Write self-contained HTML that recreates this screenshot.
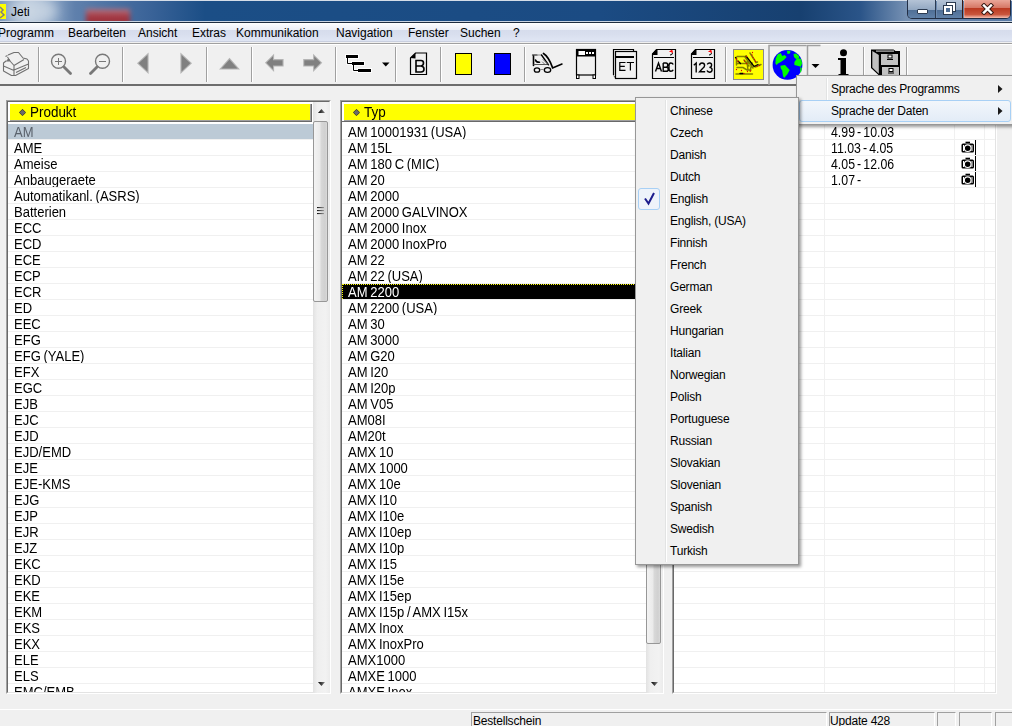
<!DOCTYPE html>
<html><head><meta charset="utf-8">
<style>
*{margin:0;padding:0;box-sizing:border-box}
html,body{width:1012px;height:726px;overflow:hidden;background:#f0f0f0;font-family:"Liberation Sans",sans-serif}
.a{position:absolute}
.t{position:absolute;white-space:nowrap}
.sep{position:absolute;top:47px;width:2px;height:35px;border-left:1px solid #a0a0a0;border-right:1px solid #fff}
.row{position:absolute;height:16px;white-space:nowrap;font-size:13px;line-height:16px;color:#000;word-spacing:-1px}
.hl{position:absolute;height:1px;background:#f0f0f0}
.tx{display:inline-block;font-size:14px;transform:scaleX(.93);transform-origin:0 0;position:relative}
.mi{position:absolute;font-size:12px;color:#000;white-space:nowrap}
</style></head><body>

<div class="a" style="left:0;top:0;width:1012px;height:23px;background:linear-gradient(90deg,#7d98bb 0px,#a9bbd2 30px,#88a2c3 50px,#5f80ac 75px,#4d72a3 110px,#3a6398 150px,#1b4e86 205px,#1b4b83 600px,#174070 800px,#2a5488 860px,#7590b3 906px,#5678a5 1012px)"></div>
<div class="a" style="left:0;top:0;width:1012px;height:1px;background:#d5dde8"></div>
<div class="a" style="left:0;top:1px;width:300px;height:20px;overflow:hidden"><div class="a" style="left:86px;top:8px;width:44px;height:16px;background:linear-gradient(#b87a86,#a33843 45%,#9a2e38);filter:blur(2.5px)"></div><div class="a" style="left:8px;top:-4px;width:50px;height:28px;border-radius:50%;background:#d6e0ea;filter:blur(6px);opacity:.7"></div></div>
<div class="a" style="left:0;top:21px;width:1012px;height:1px;background:#c9d4e3"></div>
<div class="a" style="left:0;top:22px;width:1012px;height:1px;background:#1f2d40"></div>
<div class="a" style="left:0;top:4px;width:6px;height:15px;background:#ff0"></div>
<svg class="a" style="left:0;top:4px" width="6" height="15"><path d="M0 3 L3 6 L1 8 L4 11 L0 14" fill="none" stroke="#808080" stroke-width="1.5"/></svg>
<div class="t" style="left:11px;top:5px;font-size:12px;color:#000">Jeti</div>
<div class="a" style="left:907px;top:0;width:104px;height:19px;border:1px solid rgba(20,30,50,.85);border-top:none;border-radius:0 0 5px 5px;overflow:hidden"><div class="a" style="left:0;top:0;width:28px;height:19px;background:linear-gradient(#b4c3d6 0%,#93a8c2 50%,#4f6e95 52%,#6283ab 100%);border-right:1px solid #2a3a52"></div><div class="a" style="left:29px;top:0;width:26px;height:19px;background:linear-gradient(#b4c3d6 0%,#93a8c2 50%,#4f6e95 52%,#6283ab 100%);border-right:1px solid #3a1a14"></div><div class="a" style="left:56px;top:0;width:48px;height:18px;background:linear-gradient(#eaa799 0%,#d67866 45%,#bb3a22 50%,#c9553c 85%,#e8a090 100%);border:1px solid rgba(255,200,180,.35);border-top:none"></div></div>
<div class="a" style="left:917px;top:9px;width:11px;height:5px;background:#fff;border:1px solid #2b3a50;border-radius:1px"></div>
<div class="a" style="left:947px;top:3px;width:8px;height:8px;border:2px solid #fff;outline:1px solid #2b3a50"></div>
<div class="a" style="left:944px;top:6px;width:8px;height:8px;border:2px solid #fff;outline:1px solid #2b3a50;background:#4f6e95"></div>
<svg class="a" style="left:980px;top:3px" width="15" height="12"><path d="M4 2.5 L11 9.5 M11 2.5 L4 9.5" stroke="#3a1a14" stroke-width="4.4" stroke-linecap="square"/><path d="M4 2.5 L11 9.5 M11 2.5 L4 9.5" stroke="#fff" stroke-width="2.4" stroke-linecap="square"/></svg>
<div class="a" style="left:0;top:23px;width:1012px;height:18px;background:linear-gradient(#ffffff 0px,#f5f6fb 3px,#eceff7 7px,#d6dcec 7px,#d8deee 11px,#e0e6f4 18px)"></div>
<div class="a" style="left:0;top:41px;width:1012px;height:1px;background:#c9cfdf"></div>
<div class="a" style="left:0;top:42px;width:1012px;height:1px;background:#f0f0f0"></div>
<div class="a" style="left:0;top:43px;width:1012px;height:1px;background:#a0a0a0"></div>
<div class="a" style="left:0;top:44px;width:1012px;height:1px;background:#fff"></div>
<div class="mi" style="left:-2px;top:26px">Programm</div>
<div class="mi" style="left:68px;top:26px">Bearbeiten</div>
<div class="mi" style="left:138px;top:26px">Ansicht</div>
<div class="mi" style="left:192px;top:26px">Extras</div>
<div class="mi" style="left:236px;top:26px">Kommunikation</div>
<div class="mi" style="left:336px;top:26px">Navigation</div>
<div class="mi" style="left:408px;top:26px">Fenster</div>
<div class="mi" style="left:460px;top:26px">Suchen</div>
<div class="mi" style="left:513px;top:26px">?</div>
<div class="a" style="left:0;top:84px;width:1012px;height:2px;background:#6d6d6d"></div>
<div class="sep" style="left:38px"></div>
<div class="sep" style="left:122px"></div>
<div class="sep" style="left:206px"></div>
<div class="sep" style="left:251px"></div>
<div class="sep" style="left:335px"></div>
<div class="sep" style="left:395px"></div>
<div class="sep" style="left:440px"></div>
<div class="sep" style="left:524px"></div>
<div class="sep" style="left:725px"></div>
<div class="sep" style="left:863px"></div>
<div class="sep" style="left:906px"></div>
<svg class="a" style="left:0;top:0" width="1012" height="90" shape-rendering="geometricPrecision">
<g fill="none" stroke="#707070" stroke-width="1.1" stroke-linejoin="round">
 <path d="M5.5 56.5 L7.5 55.5 M8 55 L14 52.5 L18.5 52.5 L23 58 L27 59 L28.5 61 L28.5 68.5 L15.5 75.5 L11.5 75.5 L3.5 71 L3.5 63 L6 61 L10 61 L14 65.5 L14 75.5 M14 65.5 L24 59.5 M7.5 57 L10 61 M3.5 66 L14 70.5 M14 70 L28.5 64 M16 72.5 L26 67.5"/>
</g>
<path d="M7.5 59 L9.5 59 L10.5 61 L7 61Z" fill="#707070"/>
<g fill="none" stroke="#787878">
 <circle cx="58.5" cy="61.3" r="7" stroke-width="1.4"/>
 <path d="M55 61.5 H62 M58.5 58 V65" stroke-width="1"/>
 <path d="M64 67 L70.5 73.5" stroke-width="2.8" stroke-linecap="round"/>
 <circle cx="102.5" cy="61.3" r="7" stroke-width="1.4"/>
 <path d="M99 61.5 H106" stroke-width="1"/>
 <path d="M97 67 L90.5 73.5" stroke-width="2.8" stroke-linecap="round"/>
</g>
<g fill="#808080" stroke="#b4b4b4" stroke-width="2.2" paint-order="stroke" stroke-linejoin="miter">
 <path d="M147.5 55 L147.5 71.5 L138.6 63.2Z"/>
 <path d="M181.5 55 L181.5 71.5 L190.4 63.2Z"/>
 <path d="M221.5 68.5 L229.5 59.5 L237.5 68.5Z"/>
 <path d="M266.5 62.8 L273 56.3 L273 60.2 L282.5 60.2 L282.5 65.5 L273 65.5 L273 69.3Z"/>
 <path d="M320.7 62.8 L314.2 56.3 L314.2 60.2 L304.3 60.2 L304.3 65.5 L314.2 65.5 L314.2 69.3Z"/>
</g>
<g fill="#fff">
 <rect x="345" y="54" width="14" height="5"/>
 <rect x="351" y="61" width="14" height="5"/>
 <rect x="357" y="68" width="15" height="5"/>
</g>
<g fill="#000">
 <rect x="346" y="55" width="12" height="3"/>
 <rect x="352" y="62" width="12" height="3"/>
 <rect x="358" y="69" width="13" height="3"/>
</g>
<path d="M347.5 58 V63.5 H351.5 M353.5 65 V70.5 H357.5" fill="none" stroke="#fff" stroke-width="2.5"/><path d="M347.5 58 V63.5 H352 M353.5 65 V70.5 H358" fill="none" stroke="#000" stroke-width="1"/><g fill="#000"><rect x="346" y="55" width="12" height="3"/><rect x="352" y="62" width="12" height="3"/><rect x="358" y="69" width="13" height="3"/></g>
<path d="M382 62.5 H389.5 L385.75 66.5Z" fill="#000"/>
<path d="M410.5 58 L415.5 53 H426.5 V74.5 H410.5Z" fill="#f0f0f0" stroke="#000" stroke-width="1.2"/>
<path d="M410.5 58 L415.5 53 V58.5Z" fill="#000"/>
<path d="M416 60.5 H421 Q423.5 60.5 423.5 63 Q423.5 65.5 421 66 Q424 66.5 424 69 Q424 72 421 72 H416Z M416 66 H421" fill="none" stroke="#000" stroke-width="1.6"/>
<rect x="455.5" y="53.5" width="16" height="21" fill="#ff0" stroke="#000" stroke-width="1"/>
<rect x="494.5" y="53.5" width="16" height="21" fill="#00f" stroke="#000" stroke-width="1"/>
<g transform="translate(528,46)" fill="none" stroke-linecap="round">
 <path d="M5.5 10 V19.5" stroke="#000" stroke-width="1.6"/>
 <path d="M4.5 9 L9 9" stroke="#000" stroke-width="1.2"/>
 <path d="M9 9 L13.5 9" stroke="#888" stroke-width="1.2"/>
 <path d="M6 18.5 L19.5 18.5" stroke="#555" stroke-width="1.1"/>
 <path d="M7.5 14 Q8 16.2 11.5 16.3" stroke="#000" stroke-width="1.6"/>
 <path d="M13.5 9 L20.5 18.8" stroke="#000" stroke-width="1.4"/>
 <path d="M15 13.5 L19.5 18 M14.5 16 L16.5 18" stroke="#777" stroke-width="1"/>
 <path d="M15.5 7.5 Q20.5 10.5 24.5 21.5" stroke="#000" stroke-width="1.7"/>
 <path d="M24.5 22 L34 18" stroke="#000" stroke-width="1.5"/>
 <ellipse cx="9" cy="24" rx="2.7" ry="2.2" stroke="#000" stroke-width="1.3"/>
 <ellipse cx="19.5" cy="24" rx="3.2" ry="2.3" stroke="#000" stroke-width="1.3"/>
 <path d="M12.5 23.5 H15.5" stroke="#888" stroke-width="1"/>
</g>
<rect x="576.5" y="49.5" width="19" height="25.5" fill="#f0f0f0" stroke="#000" stroke-width="1.2"/>
<rect x="576" y="49" width="20" height="7.5" fill="#000"/>
<rect x="578.5" y="51" width="6.5" height="4" fill="#fff"/>
<rect x="586" y="52" width="2" height="2" fill="#fff"/><rect x="589" y="52" width="2" height="2" fill="#fff"/><rect x="592" y="52" width="2" height="2" fill="#fff"/>
<rect x="576.5" y="75" width="2.5" height="3.5" fill="#fff" stroke="#000"/><rect x="593" y="75" width="2.5" height="3.5" fill="#fff" stroke="#000"/>
<path d="M613.5 75 V49.5 H633.5 V51.5" fill="#f0f0f0" stroke="#000" stroke-width="1.2"/>
<path d="M613.5 75.5 L615.5 78" stroke="#555" stroke-width="1"/>
<rect x="615.5" y="51.5" width="21" height="27" fill="#f0f0f0" stroke="#000" stroke-width="1.2"/>
<rect x="616" y="56" width="18" height="2" fill="#000"/>
<path d="M625.5 62.5 H619.8 V70.3 H625.5 M619.8 66.4 H624.8 M626.8 62.5 H634 M630.4 62.5 V70.5" fill="none" stroke="#000" stroke-width="1.2"/>
<g>
 <path d="M652.5 54 L656.5 49.5 H675.5 V78.5 H652.5Z" fill="#f0f0f0" stroke="#000" stroke-width="1.2"/>
 <path d="M652 54 L656.5 49 L657.5 49 V55 H652Z" fill="#000"/>
 <path d="M654 57.5 H674" stroke="#000" stroke-width="1"/>
 <path d="M671 50 L672.5 53 M669.5 51.5 L673 51" stroke="#f00" stroke-width="1.2"/>
 <path d="M670 55 Q672.5 55 672.5 53" fill="none" stroke="#000" stroke-width="1"/>
 <path d="M655.5 71.5 L658.5 63 L661.5 71.5 M656.6 68.5 H660.4 M663.2 63 V71.3 H666.5 Q668.2 71.3 668.2 69.2 Q668.2 67.2 666.3 67.2 H663.2 M663.2 63 H666 Q667.7 63 667.7 65 Q667.7 67.2 666 67.2 M673.2 64.6 Q672.6 63 670.8 63 Q669 63 669 65.5 V68.8 Q669 71.3 670.8 71.3 Q672.6 71.3 673.2 69.7" fill="none" stroke="#000" stroke-width="1.4"/>
 <path d="M691.5 54 L695.5 49.5 H714.5 V78.5 H691.5Z" fill="#f0f0f0" stroke="#000" stroke-width="1.2"/>
 <path d="M691 54 L695.5 49 L696.5 49 V55 H691Z" fill="#000"/>
 <path d="M693 57.5 H713" stroke="#000" stroke-width="1"/>
 <path d="M710 50 L711.5 53 M708.5 51.5 L712 51" stroke="#f00" stroke-width="1.2"/>
 <path d="M709 55 Q711.5 55 711.5 53" fill="none" stroke="#000" stroke-width="1"/>
 <path d="M693.8 65.2 L696.2 63 V72.5 M699.5 65.3 Q699.8 63 702 63 Q704.6 63 704.6 65.5 Q704.6 67.2 702.3 68.8 L699.6 71.8 H705.2 M707.2 64.3 Q708 63 709.6 63 Q711.6 63 711.6 65.1 Q711.6 67.3 709.4 67.4 Q712.1 67.6 712.1 69.8 Q712.1 72.2 709.6 72.2 Q707.6 72.2 707 70.6" fill="none" stroke="#000" stroke-width="1.4"/>
</g>
<rect x="733.5" y="49.5" width="30" height="30" fill="#ff0" stroke="#8a8a8a" stroke-width="1"/>
<g transform="translate(734,50)" fill="none" stroke-linecap="round">
 <path d="M3 6.5 L11 6.5 M2.5 8 V15 M3 13.5 L14 13.5 M3 17.5 L9 17.5 L13 20 L17 20 M2 24 L18.5 24 M11 7 L19 18 M10 10 L15 16 M13 12 L14 20 M18 13 L16 21 M16 3 L22 12.5 L23.5 12 M21 17 L27 14.5" stroke="#808000" stroke-width="1.5"/>
 <path d="M12 6 L20 16.5 L24 14.5 M4 11 L6.5 13.5 M6 23.5 H9 M1.5 7.5 L2 8" stroke="#000" stroke-width="1.3"/>
 <path d="M2.5 9 L2.5 9.2 M4 11.5 L4 11.6 M10.5 11 L10.5 11.1 M12.5 13.5 L12.5 13.6 M2.5 19.5 L2.5 19.6 M7.5 20.5 L7.5 20.6 M13.5 21.5 L13.5 21.6 M16.5 21 L16.5 21.1 M12.5 6.5 L12.5 6.6 M18.5 2.5 L18.5 2.6 M18 5 L18 5.1 M19 7.5 L19 7.6 M20.5 9.5 L20.5 9.6 M21.5 11.5 L21.5 11.6 M23 16.5 L23 16.6 M25.5 15.5 L25.5 15.6 M10 23.5 L10 23.6" stroke="#e00000" stroke-width="1.3"/>
</g>
<path d="M769 85 V45.5 H806.5 M807.5 76 V45.5 H820.5" fill="none" stroke="#a0a0a0" stroke-width="1.5"/>
<circle cx="787.5" cy="64.9" r="14.9" fill="#0000ff"/>
<g fill="#00ff00">
 <path d="M775.4 63.5 L775.7 58.8 L777.6 54.6 L780.8 52.9 L782.2 56 L784.6 55 L786.7 56.9 L784.1 59.7 L780.8 62 L778 63.5 L776.6 64.9Z"/>
 <path d="M786.8 50.6 L790.5 51 L790 53.5 L787.5 54Z"/>
 <path d="M780.4 65.8 L785 64.9 L789.7 70 L787.4 74.2 L784.1 78 L783 76 L782.2 70.5 L780.8 68.6Z"/>
 <path d="M794.4 62 L797.2 58.3 L801 58.8 L802.1 63 L801 66.7 L794.4 64.9Z"/>
 <path d="M793.5 54 L796 53.5 L799 56 L799 58.3 L796 59 L794 57Z"/>
 <path d="M800.5 67 L802 68 L801 72.4 L800 71.9Z"/>
</g>
<path d="M811.5 64 H819.5 L815.5 68Z" fill="#000"/>
<circle cx="843.5" cy="52.8" r="3.5" fill="#000"/>
<path d="M838 58 H846 V74 H848.5 V75.5 H838.5 V74 H840.5 V60 H838Z" fill="#000"/>
<path d="M871 49.5 H893.5 L895.5 51 H900 V75 H878.5 L871 68Z" fill="#000"/>
<path d="M872.3 51 L878.8 55 V73.8 L872.3 67.5Z" fill="#c0c0c0"/>
<rect x="881" y="54" width="17" height="11" fill="#c0c0c0"/>
<rect x="882" y="67" width="17" height="8" fill="#c0c0c0"/>
<rect x="876" y="50.5" width="18" height="1.2" fill="#c0c0c0"/>
<rect x="888" y="55" width="4" height="3" fill="#fff" stroke="#000" stroke-width="1"/>
<rect x="887" y="59" width="6" height="1" fill="#000"/>
<rect x="889" y="68.5" width="4" height="3" fill="#fff" stroke="#000" stroke-width="1"/>
<rect x="888" y="72.5" width="6" height="1" fill="#000"/>
</svg>
<div class="a" style="left:6px;top:100px;width:325px;height:594px;background:#fff;border-top:1px solid #a0a0a0;border-left:1px solid #a0a0a0;border-right:1px solid #fff;border-bottom:1px solid #fff"></div>
<div class="a" style="left:7px;top:101px;width:323px;height:592px;border-top:1px solid #696969;border-left:1px solid #696969;border-right:1px solid #e3e3e3;border-bottom:1px solid #e3e3e3"></div>
<div class="a" style="left:8px;top:102px;width:305px;height:22px;background:#fff"></div>
<div class="a" style="left:10px;top:104px;width:302px;height:18px;background:#ff0;border-right:1px solid #696969;border-bottom:1px solid #696969"></div>
<div class="a" style="left:10px;top:104px;width:301px;height:17px;border-right:1px solid #a0a0a0;border-bottom:1px solid #a0a0a0"></div>
<div class="a" style="left:8px;top:121px;width:304px;height:1px;background:#696969"></div>
<svg class="a" style="left:19px;top:108.5px" width="7" height="7"><path d="M3.5 0.3 L6.7 3.5 L3.5 6.7 L0.3 3.5Z" fill="#6a6a6a" stroke="#202020" stroke-width="0.7"/></svg>
<div class="t" style="left:30px;top:104px;font-size:14px;line-height:16px;transform:scaleX(.96);transform-origin:0 0">Produkt</div>
<div class="row" style="left:8px;top:124px;width:305px;height:15px;line-height:15px;overflow:hidden;background:#bccad6;color:#5a626c;padding-left:6px"><span class="tx" style="top:1px">AM</span></div>
<div class="hl" style="left:8px;top:139px;width:305px"></div>
<div class="row" style="left:8px;top:140px;width:305px;height:15px;line-height:15px;overflow:hidden;color:#000;padding-left:6px"><span class="tx" style="top:1px">AME</span></div>
<div class="hl" style="left:8px;top:155px;width:305px"></div>
<div class="row" style="left:8px;top:156px;width:305px;height:15px;line-height:15px;overflow:hidden;color:#000;padding-left:6px"><span class="tx" style="top:1px">Ameise</span></div>
<div class="hl" style="left:8px;top:171px;width:305px"></div>
<div class="row" style="left:8px;top:172px;width:305px;height:15px;line-height:15px;overflow:hidden;color:#000;padding-left:6px"><span class="tx" style="top:1px">Anbaugeraete</span></div>
<div class="hl" style="left:8px;top:187px;width:305px"></div>
<div class="row" style="left:8px;top:188px;width:305px;height:15px;line-height:15px;overflow:hidden;color:#000;padding-left:6px"><span class="tx" style="top:1px">Automatikanl. (ASRS)</span></div>
<div class="hl" style="left:8px;top:203px;width:305px"></div>
<div class="row" style="left:8px;top:204px;width:305px;height:15px;line-height:15px;overflow:hidden;color:#000;padding-left:6px"><span class="tx" style="top:1px">Batterien</span></div>
<div class="hl" style="left:8px;top:219px;width:305px"></div>
<div class="row" style="left:8px;top:220px;width:305px;height:15px;line-height:15px;overflow:hidden;color:#000;padding-left:6px"><span class="tx" style="top:1px">ECC</span></div>
<div class="hl" style="left:8px;top:235px;width:305px"></div>
<div class="row" style="left:8px;top:236px;width:305px;height:15px;line-height:15px;overflow:hidden;color:#000;padding-left:6px"><span class="tx" style="top:1px">ECD</span></div>
<div class="hl" style="left:8px;top:251px;width:305px"></div>
<div class="row" style="left:8px;top:252px;width:305px;height:15px;line-height:15px;overflow:hidden;color:#000;padding-left:6px"><span class="tx" style="top:1px">ECE</span></div>
<div class="hl" style="left:8px;top:267px;width:305px"></div>
<div class="row" style="left:8px;top:268px;width:305px;height:15px;line-height:15px;overflow:hidden;color:#000;padding-left:6px"><span class="tx" style="top:1px">ECP</span></div>
<div class="hl" style="left:8px;top:283px;width:305px"></div>
<div class="row" style="left:8px;top:284px;width:305px;height:15px;line-height:15px;overflow:hidden;color:#000;padding-left:6px"><span class="tx" style="top:1px">ECR</span></div>
<div class="hl" style="left:8px;top:299px;width:305px"></div>
<div class="row" style="left:8px;top:300px;width:305px;height:15px;line-height:15px;overflow:hidden;color:#000;padding-left:6px"><span class="tx" style="top:1px">ED</span></div>
<div class="hl" style="left:8px;top:315px;width:305px"></div>
<div class="row" style="left:8px;top:316px;width:305px;height:15px;line-height:15px;overflow:hidden;color:#000;padding-left:6px"><span class="tx" style="top:1px">EEC</span></div>
<div class="hl" style="left:8px;top:331px;width:305px"></div>
<div class="row" style="left:8px;top:332px;width:305px;height:15px;line-height:15px;overflow:hidden;color:#000;padding-left:6px"><span class="tx" style="top:1px">EFG</span></div>
<div class="hl" style="left:8px;top:347px;width:305px"></div>
<div class="row" style="left:8px;top:348px;width:305px;height:15px;line-height:15px;overflow:hidden;color:#000;padding-left:6px"><span class="tx" style="top:1px">EFG (YALE)</span></div>
<div class="hl" style="left:8px;top:363px;width:305px"></div>
<div class="row" style="left:8px;top:364px;width:305px;height:15px;line-height:15px;overflow:hidden;color:#000;padding-left:6px"><span class="tx" style="top:1px">EFX</span></div>
<div class="hl" style="left:8px;top:379px;width:305px"></div>
<div class="row" style="left:8px;top:380px;width:305px;height:15px;line-height:15px;overflow:hidden;color:#000;padding-left:6px"><span class="tx" style="top:1px">EGC</span></div>
<div class="hl" style="left:8px;top:395px;width:305px"></div>
<div class="row" style="left:8px;top:396px;width:305px;height:15px;line-height:15px;overflow:hidden;color:#000;padding-left:6px"><span class="tx" style="top:1px">EJB</span></div>
<div class="hl" style="left:8px;top:411px;width:305px"></div>
<div class="row" style="left:8px;top:412px;width:305px;height:15px;line-height:15px;overflow:hidden;color:#000;padding-left:6px"><span class="tx" style="top:1px">EJC</span></div>
<div class="hl" style="left:8px;top:427px;width:305px"></div>
<div class="row" style="left:8px;top:428px;width:305px;height:15px;line-height:15px;overflow:hidden;color:#000;padding-left:6px"><span class="tx" style="top:1px">EJD</span></div>
<div class="hl" style="left:8px;top:443px;width:305px"></div>
<div class="row" style="left:8px;top:444px;width:305px;height:15px;line-height:15px;overflow:hidden;color:#000;padding-left:6px"><span class="tx" style="top:1px">EJD/EMD</span></div>
<div class="hl" style="left:8px;top:459px;width:305px"></div>
<div class="row" style="left:8px;top:460px;width:305px;height:15px;line-height:15px;overflow:hidden;color:#000;padding-left:6px"><span class="tx" style="top:1px">EJE</span></div>
<div class="hl" style="left:8px;top:475px;width:305px"></div>
<div class="row" style="left:8px;top:476px;width:305px;height:15px;line-height:15px;overflow:hidden;color:#000;padding-left:6px"><span class="tx" style="top:1px">EJE-KMS</span></div>
<div class="hl" style="left:8px;top:491px;width:305px"></div>
<div class="row" style="left:8px;top:492px;width:305px;height:15px;line-height:15px;overflow:hidden;color:#000;padding-left:6px"><span class="tx" style="top:1px">EJG</span></div>
<div class="hl" style="left:8px;top:507px;width:305px"></div>
<div class="row" style="left:8px;top:508px;width:305px;height:15px;line-height:15px;overflow:hidden;color:#000;padding-left:6px"><span class="tx" style="top:1px">EJP</span></div>
<div class="hl" style="left:8px;top:523px;width:305px"></div>
<div class="row" style="left:8px;top:524px;width:305px;height:15px;line-height:15px;overflow:hidden;color:#000;padding-left:6px"><span class="tx" style="top:1px">EJR</span></div>
<div class="hl" style="left:8px;top:539px;width:305px"></div>
<div class="row" style="left:8px;top:540px;width:305px;height:15px;line-height:15px;overflow:hidden;color:#000;padding-left:6px"><span class="tx" style="top:1px">EJZ</span></div>
<div class="hl" style="left:8px;top:555px;width:305px"></div>
<div class="row" style="left:8px;top:556px;width:305px;height:15px;line-height:15px;overflow:hidden;color:#000;padding-left:6px"><span class="tx" style="top:1px">EKC</span></div>
<div class="hl" style="left:8px;top:571px;width:305px"></div>
<div class="row" style="left:8px;top:572px;width:305px;height:15px;line-height:15px;overflow:hidden;color:#000;padding-left:6px"><span class="tx" style="top:1px">EKD</span></div>
<div class="hl" style="left:8px;top:587px;width:305px"></div>
<div class="row" style="left:8px;top:588px;width:305px;height:15px;line-height:15px;overflow:hidden;color:#000;padding-left:6px"><span class="tx" style="top:1px">EKE</span></div>
<div class="hl" style="left:8px;top:603px;width:305px"></div>
<div class="row" style="left:8px;top:604px;width:305px;height:15px;line-height:15px;overflow:hidden;color:#000;padding-left:6px"><span class="tx" style="top:1px">EKM</span></div>
<div class="hl" style="left:8px;top:619px;width:305px"></div>
<div class="row" style="left:8px;top:620px;width:305px;height:15px;line-height:15px;overflow:hidden;color:#000;padding-left:6px"><span class="tx" style="top:1px">EKS</span></div>
<div class="hl" style="left:8px;top:635px;width:305px"></div>
<div class="row" style="left:8px;top:636px;width:305px;height:15px;line-height:15px;overflow:hidden;color:#000;padding-left:6px"><span class="tx" style="top:1px">EKX</span></div>
<div class="hl" style="left:8px;top:651px;width:305px"></div>
<div class="row" style="left:8px;top:652px;width:305px;height:15px;line-height:15px;overflow:hidden;color:#000;padding-left:6px"><span class="tx" style="top:1px">ELE</span></div>
<div class="hl" style="left:8px;top:667px;width:305px"></div>
<div class="row" style="left:8px;top:668px;width:305px;height:15px;line-height:15px;overflow:hidden;color:#000;padding-left:6px"><span class="tx" style="top:1px">ELS</span></div>
<div class="hl" style="left:8px;top:683px;width:305px"></div>
<div class="row" style="left:8px;top:684px;width:305px;height:8px;line-height:15px;overflow:hidden;color:#000;padding-left:6px"><span class="tx" style="top:1px">EMC/EMB</span></div>
<div class="a" style="left:313px;top:102px;width:17px;height:591px;background:linear-gradient(90deg,#e2e2e2,#efefef 25%,#f2f2f2 75%,#ebebeb)"></div>
<svg class="a" style="left:317px;top:108px" width="9" height="6"><defs><linearGradient id="ag6" x1="0" x2="1"><stop offset="0" stop-color="#000"/><stop offset="1" stop-color="#888"/></linearGradient></defs><path d="M1 5 L4.5 1 L8 5Z" fill="url(#ag6)"/></svg>
<svg class="a" style="left:317px;top:681px" width="9" height="6"><path d="M1 1 L4.5 5 L8 1Z" fill="url(#ag6)"/></svg>
<div class="a" style="left:313px;top:121px;width:15px;height:181px;border:1px solid #979797;border-radius:2px;background:linear-gradient(90deg,#f3f3f3,#eaeaea 45%,#d8d8d8 55%,#d0d0d0 85%,#dadada)"></div>
<svg class="a" style="left:316px;top:206px" width="9" height="9"><defs><linearGradient id="gg" x1="0" x2="1"><stop offset="0" stop-color="#111"/><stop offset="1" stop-color="#999"/></linearGradient></defs><rect x="1" y="1" width="7" height="1.1" fill="url(#gg)"/><rect x="1" y="4" width="7" height="1.1" fill="url(#gg)"/><rect x="1" y="7" width="7" height="1.1" fill="url(#gg)"/></svg>
<div class="a" style="left:340px;top:100px;width:324px;height:594px;background:#fff;border-top:1px solid #a0a0a0;border-left:1px solid #a0a0a0;border-right:1px solid #fff;border-bottom:1px solid #fff"></div>
<div class="a" style="left:341px;top:101px;width:322px;height:592px;border-top:1px solid #696969;border-left:1px solid #696969;border-right:1px solid #e3e3e3;border-bottom:1px solid #e3e3e3"></div>
<div class="a" style="left:342px;top:102px;width:304px;height:22px;background:#fff"></div>
<div class="a" style="left:344px;top:104px;width:301px;height:18px;background:#ff0;border-right:1px solid #696969;border-bottom:1px solid #696969"></div>
<div class="a" style="left:344px;top:104px;width:300px;height:17px;border-right:1px solid #a0a0a0;border-bottom:1px solid #a0a0a0"></div>
<div class="a" style="left:342px;top:121px;width:303px;height:1px;background:#696969"></div>
<svg class="a" style="left:353px;top:108.5px" width="7" height="7"><path d="M3.5 0.3 L6.7 3.5 L3.5 6.7 L0.3 3.5Z" fill="#6a6a6a" stroke="#202020" stroke-width="0.7"/></svg>
<div class="t" style="left:364px;top:104px;font-size:14px;line-height:16px;transform:scaleX(.96);transform-origin:0 0">Typ</div>
<div class="row" style="left:342px;top:124px;width:304px;height:15px;line-height:15px;overflow:hidden;color:#000;padding-left:6px"><span class="tx" style="top:1px">AM 10001931 (USA)</span></div>
<div class="hl" style="left:342px;top:139px;width:304px"></div>
<div class="row" style="left:342px;top:140px;width:304px;height:15px;line-height:15px;overflow:hidden;color:#000;padding-left:6px"><span class="tx" style="top:1px">AM 15L</span></div>
<div class="hl" style="left:342px;top:155px;width:304px"></div>
<div class="row" style="left:342px;top:156px;width:304px;height:15px;line-height:15px;overflow:hidden;color:#000;padding-left:6px"><span class="tx" style="top:1px">AM 180 C (MIC)</span></div>
<div class="hl" style="left:342px;top:171px;width:304px"></div>
<div class="row" style="left:342px;top:172px;width:304px;height:15px;line-height:15px;overflow:hidden;color:#000;padding-left:6px"><span class="tx" style="top:1px">AM 20</span></div>
<div class="hl" style="left:342px;top:187px;width:304px"></div>
<div class="row" style="left:342px;top:188px;width:304px;height:15px;line-height:15px;overflow:hidden;color:#000;padding-left:6px"><span class="tx" style="top:1px">AM 2000</span></div>
<div class="hl" style="left:342px;top:203px;width:304px"></div>
<div class="row" style="left:342px;top:204px;width:304px;height:15px;line-height:15px;overflow:hidden;color:#000;padding-left:6px"><span class="tx" style="top:1px">AM 2000 GALVINOX</span></div>
<div class="hl" style="left:342px;top:219px;width:304px"></div>
<div class="row" style="left:342px;top:220px;width:304px;height:15px;line-height:15px;overflow:hidden;color:#000;padding-left:6px"><span class="tx" style="top:1px">AM 2000 Inox</span></div>
<div class="hl" style="left:342px;top:235px;width:304px"></div>
<div class="row" style="left:342px;top:236px;width:304px;height:15px;line-height:15px;overflow:hidden;color:#000;padding-left:6px"><span class="tx" style="top:1px">AM 2000 InoxPro</span></div>
<div class="hl" style="left:342px;top:251px;width:304px"></div>
<div class="row" style="left:342px;top:252px;width:304px;height:15px;line-height:15px;overflow:hidden;color:#000;padding-left:6px"><span class="tx" style="top:1px">AM 22</span></div>
<div class="hl" style="left:342px;top:267px;width:304px"></div>
<div class="row" style="left:342px;top:268px;width:304px;height:15px;line-height:15px;overflow:hidden;color:#000;padding-left:6px"><span class="tx" style="top:1px">AM 22 (USA)</span></div>
<div class="hl" style="left:342px;top:283px;width:304px"></div>
<div class="row" style="left:342px;top:284px;width:304px;height:15px;line-height:15px;overflow:hidden;background:#000;color:#fff;padding-left:6px"><span class="tx" style="top:1px">AM 2200</span></div>
<div class="a" style="left:342px;top:284px;width:304px;height:15px;border-top:1px dotted #ff0;border-left:1px dotted #ff0"></div>
<div class="hl" style="left:342px;top:299px;width:304px"></div>
<div class="row" style="left:342px;top:300px;width:304px;height:15px;line-height:15px;overflow:hidden;color:#000;padding-left:6px"><span class="tx" style="top:1px">AM 2200 (USA)</span></div>
<div class="hl" style="left:342px;top:315px;width:304px"></div>
<div class="row" style="left:342px;top:316px;width:304px;height:15px;line-height:15px;overflow:hidden;color:#000;padding-left:6px"><span class="tx" style="top:1px">AM 30</span></div>
<div class="hl" style="left:342px;top:331px;width:304px"></div>
<div class="row" style="left:342px;top:332px;width:304px;height:15px;line-height:15px;overflow:hidden;color:#000;padding-left:6px"><span class="tx" style="top:1px">AM 3000</span></div>
<div class="hl" style="left:342px;top:347px;width:304px"></div>
<div class="row" style="left:342px;top:348px;width:304px;height:15px;line-height:15px;overflow:hidden;color:#000;padding-left:6px"><span class="tx" style="top:1px">AM G20</span></div>
<div class="hl" style="left:342px;top:363px;width:304px"></div>
<div class="row" style="left:342px;top:364px;width:304px;height:15px;line-height:15px;overflow:hidden;color:#000;padding-left:6px"><span class="tx" style="top:1px">AM I20</span></div>
<div class="hl" style="left:342px;top:379px;width:304px"></div>
<div class="row" style="left:342px;top:380px;width:304px;height:15px;line-height:15px;overflow:hidden;color:#000;padding-left:6px"><span class="tx" style="top:1px">AM I20p</span></div>
<div class="hl" style="left:342px;top:395px;width:304px"></div>
<div class="row" style="left:342px;top:396px;width:304px;height:15px;line-height:15px;overflow:hidden;color:#000;padding-left:6px"><span class="tx" style="top:1px">AM V05</span></div>
<div class="hl" style="left:342px;top:411px;width:304px"></div>
<div class="row" style="left:342px;top:412px;width:304px;height:15px;line-height:15px;overflow:hidden;color:#000;padding-left:6px"><span class="tx" style="top:1px">AM08I</span></div>
<div class="hl" style="left:342px;top:427px;width:304px"></div>
<div class="row" style="left:342px;top:428px;width:304px;height:15px;line-height:15px;overflow:hidden;color:#000;padding-left:6px"><span class="tx" style="top:1px">AM20t</span></div>
<div class="hl" style="left:342px;top:443px;width:304px"></div>
<div class="row" style="left:342px;top:444px;width:304px;height:15px;line-height:15px;overflow:hidden;color:#000;padding-left:6px"><span class="tx" style="top:1px">AMX 10</span></div>
<div class="hl" style="left:342px;top:459px;width:304px"></div>
<div class="row" style="left:342px;top:460px;width:304px;height:15px;line-height:15px;overflow:hidden;color:#000;padding-left:6px"><span class="tx" style="top:1px">AMX 1000</span></div>
<div class="hl" style="left:342px;top:475px;width:304px"></div>
<div class="row" style="left:342px;top:476px;width:304px;height:15px;line-height:15px;overflow:hidden;color:#000;padding-left:6px"><span class="tx" style="top:1px">AMX 10e</span></div>
<div class="hl" style="left:342px;top:491px;width:304px"></div>
<div class="row" style="left:342px;top:492px;width:304px;height:15px;line-height:15px;overflow:hidden;color:#000;padding-left:6px"><span class="tx" style="top:1px">AMX I10</span></div>
<div class="hl" style="left:342px;top:507px;width:304px"></div>
<div class="row" style="left:342px;top:508px;width:304px;height:15px;line-height:15px;overflow:hidden;color:#000;padding-left:6px"><span class="tx" style="top:1px">AMX I10e</span></div>
<div class="hl" style="left:342px;top:523px;width:304px"></div>
<div class="row" style="left:342px;top:524px;width:304px;height:15px;line-height:15px;overflow:hidden;color:#000;padding-left:6px"><span class="tx" style="top:1px">AMX I10ep</span></div>
<div class="hl" style="left:342px;top:539px;width:304px"></div>
<div class="row" style="left:342px;top:540px;width:304px;height:15px;line-height:15px;overflow:hidden;color:#000;padding-left:6px"><span class="tx" style="top:1px">AMX I10p</span></div>
<div class="hl" style="left:342px;top:555px;width:304px"></div>
<div class="row" style="left:342px;top:556px;width:304px;height:15px;line-height:15px;overflow:hidden;color:#000;padding-left:6px"><span class="tx" style="top:1px">AMX I15</span></div>
<div class="hl" style="left:342px;top:571px;width:304px"></div>
<div class="row" style="left:342px;top:572px;width:304px;height:15px;line-height:15px;overflow:hidden;color:#000;padding-left:6px"><span class="tx" style="top:1px">AMX I15e</span></div>
<div class="hl" style="left:342px;top:587px;width:304px"></div>
<div class="row" style="left:342px;top:588px;width:304px;height:15px;line-height:15px;overflow:hidden;color:#000;padding-left:6px"><span class="tx" style="top:1px">AMX I15ep</span></div>
<div class="hl" style="left:342px;top:603px;width:304px"></div>
<div class="row" style="left:342px;top:604px;width:304px;height:15px;line-height:15px;overflow:hidden;color:#000;padding-left:6px"><span class="tx" style="top:1px">AMX I15p / AMX I15x</span></div>
<div class="hl" style="left:342px;top:619px;width:304px"></div>
<div class="row" style="left:342px;top:620px;width:304px;height:15px;line-height:15px;overflow:hidden;color:#000;padding-left:6px"><span class="tx" style="top:1px">AMX Inox</span></div>
<div class="hl" style="left:342px;top:635px;width:304px"></div>
<div class="row" style="left:342px;top:636px;width:304px;height:15px;line-height:15px;overflow:hidden;color:#000;padding-left:6px"><span class="tx" style="top:1px">AMX InoxPro</span></div>
<div class="hl" style="left:342px;top:651px;width:304px"></div>
<div class="row" style="left:342px;top:652px;width:304px;height:15px;line-height:15px;overflow:hidden;color:#000;padding-left:6px"><span class="tx" style="top:1px">AMX1000</span></div>
<div class="hl" style="left:342px;top:667px;width:304px"></div>
<div class="row" style="left:342px;top:668px;width:304px;height:15px;line-height:15px;overflow:hidden;color:#000;padding-left:6px"><span class="tx" style="top:1px">AMXE 1000</span></div>
<div class="hl" style="left:342px;top:683px;width:304px"></div>
<div class="row" style="left:342px;top:684px;width:304px;height:8px;line-height:15px;overflow:hidden;color:#000;padding-left:6px"><span class="tx" style="top:1px">AMXE Inox</span></div>
<div class="a" style="left:646px;top:102px;width:17px;height:591px;background:linear-gradient(90deg,#e2e2e2,#efefef 25%,#f2f2f2 75%,#ebebeb)"></div>
<svg class="a" style="left:650px;top:108px" width="9" height="6"><defs><linearGradient id="ag340" x1="0" x2="1"><stop offset="0" stop-color="#000"/><stop offset="1" stop-color="#888"/></linearGradient></defs><path d="M1 5 L4.5 1 L8 5Z" fill="url(#ag340)"/></svg>
<svg class="a" style="left:650px;top:681px" width="9" height="6"><path d="M1 1 L4.5 5 L8 1Z" fill="url(#ag340)"/></svg>
<div class="a" style="left:646px;top:121px;width:15px;height:523px;border:1px solid #979797;border-radius:2px;background:linear-gradient(90deg,#f3f3f3,#eaeaea 45%,#d8d8d8 55%,#d0d0d0 85%,#dadada)"></div>
<div class="a" style="left:672px;top:100px;width:325px;height:594px;background:#fff;border-top:1px solid #a0a0a0;border-left:1px solid #a0a0a0;border-right:1px solid #fff;border-bottom:1px solid #fff"></div>
<div class="a" style="left:673px;top:101px;width:323px;height:592px;border-top:1px solid #696969;border-left:1px solid #696969;border-right:1px solid #e3e3e3;border-bottom:1px solid #e3e3e3"></div>
<div class="hl" style="left:674px;top:139px;width:321px"></div>
<div class="hl" style="left:674px;top:155px;width:321px"></div>
<div class="hl" style="left:674px;top:171px;width:321px"></div>
<div class="hl" style="left:674px;top:187px;width:321px"></div>
<div class="hl" style="left:674px;top:203px;width:321px"></div>
<div class="hl" style="left:674px;top:219px;width:321px"></div>
<div class="hl" style="left:674px;top:235px;width:321px"></div>
<div class="hl" style="left:674px;top:251px;width:321px"></div>
<div class="hl" style="left:674px;top:267px;width:321px"></div>
<div class="hl" style="left:674px;top:283px;width:321px"></div>
<div class="hl" style="left:674px;top:299px;width:321px"></div>
<div class="hl" style="left:674px;top:315px;width:321px"></div>
<div class="hl" style="left:674px;top:331px;width:321px"></div>
<div class="hl" style="left:674px;top:347px;width:321px"></div>
<div class="hl" style="left:674px;top:363px;width:321px"></div>
<div class="hl" style="left:674px;top:379px;width:321px"></div>
<div class="hl" style="left:674px;top:395px;width:321px"></div>
<div class="hl" style="left:674px;top:411px;width:321px"></div>
<div class="hl" style="left:674px;top:427px;width:321px"></div>
<div class="hl" style="left:674px;top:443px;width:321px"></div>
<div class="hl" style="left:674px;top:459px;width:321px"></div>
<div class="hl" style="left:674px;top:475px;width:321px"></div>
<div class="hl" style="left:674px;top:491px;width:321px"></div>
<div class="hl" style="left:674px;top:507px;width:321px"></div>
<div class="hl" style="left:674px;top:523px;width:321px"></div>
<div class="hl" style="left:674px;top:539px;width:321px"></div>
<div class="hl" style="left:674px;top:555px;width:321px"></div>
<div class="hl" style="left:674px;top:571px;width:321px"></div>
<div class="hl" style="left:674px;top:587px;width:321px"></div>
<div class="hl" style="left:674px;top:603px;width:321px"></div>
<div class="hl" style="left:674px;top:619px;width:321px"></div>
<div class="hl" style="left:674px;top:635px;width:321px"></div>
<div class="hl" style="left:674px;top:651px;width:321px"></div>
<div class="hl" style="left:674px;top:667px;width:321px"></div>
<div class="hl" style="left:674px;top:683px;width:321px"></div>
<div class="a" style="left:824px;top:102px;width:1px;height:590px;background:#f0f0f0"></div>
<div class="a" style="left:954px;top:102px;width:1px;height:590px;background:#f0f0f0"></div>
<div class="a" style="left:984px;top:102px;width:1px;height:590px;background:#f0f0f0"></div>
<div class="row" style="left:831px;top:124px;line-height:15px;word-spacing:-1.5px"><span class="tx" style="top:1px;transform:scaleX(.88)">4.99 - 10.03</span></div>
<div class="row" style="left:831px;top:140px;line-height:15px;word-spacing:-1.5px"><span class="tx" style="top:1px;transform:scaleX(.88)">11.03 - 4.05</span></div>
<div class="row" style="left:831px;top:156px;line-height:15px;word-spacing:-1.5px"><span class="tx" style="top:1px;transform:scaleX(.88)">4.05 - 12.06</span></div>
<div class="row" style="left:831px;top:172px;line-height:15px;word-spacing:-1.5px"><span class="tx" style="top:1px;transform:scaleX(.88)">1.07 -</span></div>
<svg class="a" style="left:960px;top:140px" width="17" height="15"><rect x="1.5" y="3.5" width="12.5" height="9" rx="1.5" fill="#000"/><path d="M5.5 2.5 H10" stroke="#000" stroke-width="1.6"/><rect x="3" y="5" width="1" height="6" fill="#fff"/><rect x="11.5" y="5" width="1" height="6" fill="#fff"/><circle cx="7.7" cy="8.2" r="3.3" fill="none" stroke="#fff" stroke-width="1.1"/><rect x="15" y="0" width="1" height="15" fill="#000"/></svg>
<svg class="a" style="left:960px;top:156px" width="17" height="15"><rect x="1.5" y="3.5" width="12.5" height="9" rx="1.5" fill="#000"/><path d="M5.5 2.5 H10" stroke="#000" stroke-width="1.6"/><rect x="3" y="5" width="1" height="6" fill="#fff"/><rect x="11.5" y="5" width="1" height="6" fill="#fff"/><circle cx="7.7" cy="8.2" r="3.3" fill="none" stroke="#fff" stroke-width="1.1"/><rect x="15" y="0" width="1" height="15" fill="#000"/></svg>
<svg class="a" style="left:960px;top:172px" width="17" height="15"><rect x="1.5" y="3.5" width="12.5" height="9" rx="1.5" fill="#000"/><path d="M5.5 2.5 H10" stroke="#000" stroke-width="1.6"/><rect x="3" y="5" width="1" height="6" fill="#fff"/><rect x="11.5" y="5" width="1" height="6" fill="#fff"/><circle cx="7.7" cy="8.2" r="3.3" fill="none" stroke="#fff" stroke-width="1.1"/><rect x="15" y="0" width="1" height="15" fill="#000"/></svg>
<div class="a" style="left:0;top:709px;width:1012px;height:1px;background:#fff"></div>
<div class="a" style="left:471px;top:712px;width:356px;height:20px;border-top:1px solid #a0a0a0;border-left:1px solid #a0a0a0;border-right:1px solid #fff"></div>
<div class="a" style="left:829px;top:712px;width:106px;height:20px;border-top:1px solid #a0a0a0;border-left:1px solid #a0a0a0;border-right:1px solid #fff"></div>
<div class="a" style="left:937px;top:712px;width:19px;height:20px;border-top:1px solid #a0a0a0;border-left:1px solid #a0a0a0;border-right:1px solid #fff"></div>
<div class="a" style="left:959px;top:712px;width:33px;height:20px;border-top:1px solid #a0a0a0;border-left:1px solid #a0a0a0;border-right:1px solid #fff"></div>
<div class="a" style="left:995px;top:712px;width:30px;height:20px;border-top:1px solid #a0a0a0;border-left:1px solid #a0a0a0;border-right:1px solid #fff"></div>
<div class="t" style="left:473px;top:714px;font-size:12px;letter-spacing:-0.2px">Bestellschein</div>
<div class="t" style="left:830px;top:714px;font-size:12px;letter-spacing:-0.2px">Update 428</div>
<div class="a" style="left:796px;top:75px;width:230px;height:50px;background:#f0f0f0;border:1px solid #979797;box-shadow:2px 2px 3px rgba(0,0,0,.4)"></div>
<div class="a" style="left:826px;top:78px;width:1px;height:44px;background:#e2e3e3"></div>
<div class="a" style="left:827px;top:78px;width:1px;height:44px;background:#fff"></div>
<div class="a" style="left:799px;top:100px;width:212px;height:22px;border:1px solid #a8d0f5;border-radius:3px;background:linear-gradient(#f2f6fb,#e3ecf7)"></div>
<div class="mi" style="left:831px;top:82px;letter-spacing:-0.2px">Sprache des Programms</div>
<div class="mi" style="left:831px;top:104px;letter-spacing:-0.2px">Sprache der Daten</div>
<svg class="a" style="left:998px;top:85px" width="5" height="8"><path d="M0 0 L4.5 4 L0 8Z" fill="#1a1a1a"/></svg>
<svg class="a" style="left:998px;top:107px" width="5" height="8"><path d="M0 0 L4.5 4 L0 8Z" fill="#1a1a1a"/></svg>
<div class="a" style="left:635px;top:97px;width:164px;height:468px;background:#f0f0f0;border:1px solid #979797;box-shadow:2px 2px 3px rgba(0,0,0,.4)"></div>
<div class="a" style="left:665px;top:100px;width:1px;height:462px;background:#e2e3e3"></div>
<div class="a" style="left:666px;top:100px;width:1px;height:462px;background:#fff"></div>
<div class="a" style="left:638px;top:188px;width:22px;height:22px;border:1px solid #a8d0f5;border-radius:3px;background:#eef3fa"></div>
<svg class="a" style="left:638px;top:188px" width="22" height="22"><path d="M7 10.5 L10.5 15.5 L16 5" fill="none" stroke="#1c1c8c" stroke-width="2"/></svg>
<div class="mi" style="left:670px;top:104px;letter-spacing:-0.2px">Chinese</div>
<div class="mi" style="left:670px;top:126px;letter-spacing:-0.2px">Czech</div>
<div class="mi" style="left:670px;top:148px;letter-spacing:-0.2px">Danish</div>
<div class="mi" style="left:670px;top:170px;letter-spacing:-0.2px">Dutch</div>
<div class="mi" style="left:670px;top:192px;letter-spacing:-0.2px">English</div>
<div class="mi" style="left:670px;top:214px;letter-spacing:-0.2px">English, (USA)</div>
<div class="mi" style="left:670px;top:236px;letter-spacing:-0.2px">Finnish</div>
<div class="mi" style="left:670px;top:258px;letter-spacing:-0.2px">French</div>
<div class="mi" style="left:670px;top:280px;letter-spacing:-0.2px">German</div>
<div class="mi" style="left:670px;top:302px;letter-spacing:-0.2px">Greek</div>
<div class="mi" style="left:670px;top:324px;letter-spacing:-0.2px">Hungarian</div>
<div class="mi" style="left:670px;top:346px;letter-spacing:-0.2px">Italian</div>
<div class="mi" style="left:670px;top:368px;letter-spacing:-0.2px">Norwegian</div>
<div class="mi" style="left:670px;top:390px;letter-spacing:-0.2px">Polish</div>
<div class="mi" style="left:670px;top:412px;letter-spacing:-0.2px">Portuguese</div>
<div class="mi" style="left:670px;top:434px;letter-spacing:-0.2px">Russian</div>
<div class="mi" style="left:670px;top:456px;letter-spacing:-0.2px">Slovakian</div>
<div class="mi" style="left:670px;top:478px;letter-spacing:-0.2px">Slovenian</div>
<div class="mi" style="left:670px;top:500px;letter-spacing:-0.2px">Spanish</div>
<div class="mi" style="left:670px;top:522px;letter-spacing:-0.2px">Swedish</div>
<div class="mi" style="left:670px;top:544px;letter-spacing:-0.2px">Turkish</div>
</body></html>
